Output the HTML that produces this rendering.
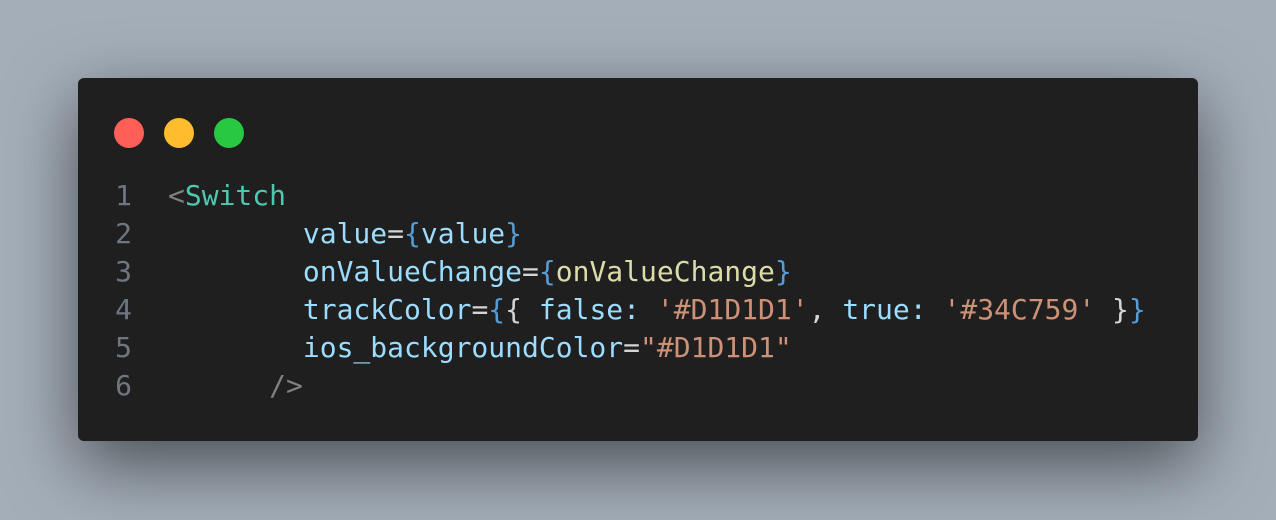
<!DOCTYPE html>
<html><head><style>
html,body{margin:0;padding:0;width:1276px;height:520px;overflow:hidden;background:#a4aeb9;}
.card{position:absolute;left:78px;top:78px;width:1120px;height:363px;background:#1f1f1f;border-radius:6px;box-shadow:0 24px 70px rgba(0,0,0,0.55);}
.dot{position:absolute;top:40px;width:30px;height:30px;border-radius:50%;}
pre{position:absolute;left:0;top:99px;margin:0;font-family:"DejaVu Sans Mono","Liberation Mono",monospace;font-size:28px;line-height:38px;color:#9cdcfe;}
.ln{display:inline-block;width:54px;text-align:right;color:#6e7681;}
.c{padding-left:36px;}
.g{color:#808080}.t{color:#4ec9b0}.a{color:#9cdcfe}.b{color:#569cd6}.w{color:#d4d4d4}.f{color:#dcdcaa}.s{color:#ce9178}
</style></head><body>
<div class="card">
<div class="dot" style="left:36px;background:#ff5f57"></div>
<div class="dot" style="left:86px;background:#febc2e"></div>
<div class="dot" style="left:136px;background:#28c840"></div>
<pre><span class="ln">1</span><span class="c"><span class="g">&lt;</span><span class="t">Switch</span></span>
<span class="ln">2</span><span class="c">        <span class="a">value</span><span class="w">=</span><span class="b">{</span><span class="a">value</span><span class="b">}</span></span>
<span class="ln">3</span><span class="c">        <span class="a">onValueChange</span><span class="w">=</span><span class="b">{</span><span class="f">onValueChange</span><span class="b">}</span></span>
<span class="ln">4</span><span class="c">        <span class="a">trackColor</span><span class="w">=</span><span class="b">{</span><span class="w">{ </span><span class="a">false: </span><span class="s">'#D1D1D1'</span><span class="w">, </span><span class="a">true: </span><span class="s">'#34C759'</span><span class="w"> }</span><span class="b">}</span></span>
<span class="ln">5</span><span class="c">        <span class="a">ios_backgroundColor</span><span class="w">=</span><span class="s">"#D1D1D1"</span></span>
<span class="ln">6</span><span class="c">      <span class="g">/&gt;</span></span></pre>
</div>
</body></html>
